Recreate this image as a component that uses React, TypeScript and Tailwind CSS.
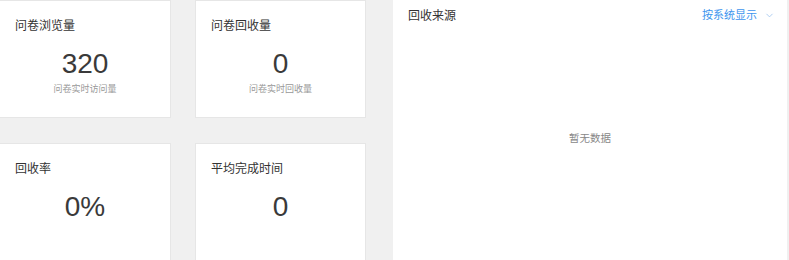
import { ChevronDown } from 'lucide-react'

type Stat = { title: string; value: string; note?: string }

const STATS: Stat[] = [
  { title: '问卷浏览量', value: '320', note: '问卷实时访问量' },
  { title: '问卷回收量', value: '0', note: '问卷实时回收量' },
  { title: '回收率', value: '0%' },
  { title: '平均完成时间', value: '0' },
]

function StatCard({ stat }: { stat: Stat }) {
  return (
    <div className="h-[118px] bg-white border border-[#e6e6e6] flex flex-col">
      <div className="pl-[15px] pt-[17px] text-[12px] leading-[16px] text-[#333]">{stat.title}</div>
      <div className="mt-[14px] text-center text-[28px] leading-[32px] text-[#3a3a3a]">{stat.value}</div>
      {stat.note && (
        <div className="mt-[3px] text-center text-[9px] leading-[12px] text-[#999]">{stat.note}</div>
      )}
    </div>
  )
}

export default function App() {
  return (
    <div
      className="w-[789px] h-[260px] overflow-hidden bg-[#f0f0f0] flex"
      style={{ fontFamily: '"Liberation Sans", Arial, "Noto Sans CJK SC", sans-serif' }}
    >
      {/* 左侧统计卡片 */}
      <div className="-ml-px grid grid-cols-[172px_171px] grid-rows-[118px_118px] gap-x-[24px] gap-y-[25px] shrink-0">
        {STATS.map(s => (
          <StatCard key={s.title} stat={s} />
        ))}
      </div>

      {/* 回收来源 */}
      <div className="ml-[27px] w-[394px] h-[260px] bg-white flex flex-col shrink-0">
        <div className="flex items-center justify-between h-[30px] pl-[15px] pr-[12px] pt-[1px]">
          <span className="text-[12px] text-[#333]">回收来源</span>
          <span className="flex items-center gap-[7px] text-[11px] text-[#3d95ee]">
            按系统显示
            <ChevronDown size={11} strokeWidth={1.75} className="text-[#9ec3ee]" />
          </span>
        </div>
        <div className="flex-1 flex items-center justify-center pb-[12px] text-[10.5px] text-[#888]">
          暂无数据
        </div>
      </div>
    </div>
  )
}
